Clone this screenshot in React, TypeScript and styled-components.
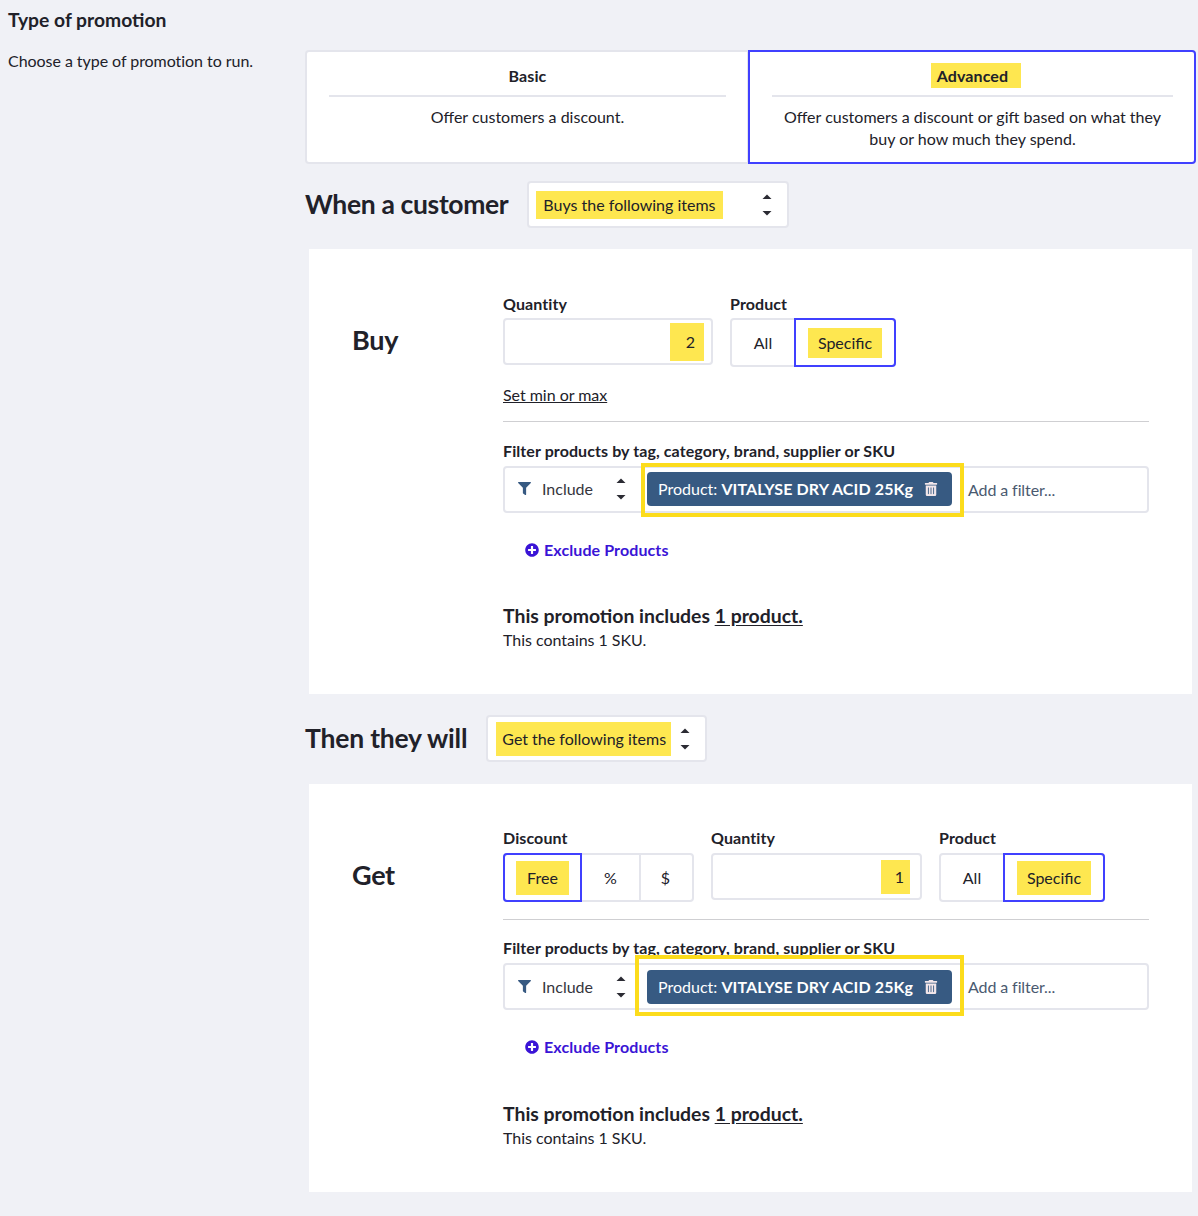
import { ReactNode } from 'react';
import { createGlobalStyle, styled } from 'styled-components';
import { FaFilter, FaPlusCircle, FaTrashAlt } from 'react-icons/fa';

const GlobalStyle = createGlobalStyle`
  html, body {
    margin: 0;
    background: #f0f1f6;
    color: #212129;
    font-family: Lato, "Open Sans", sans-serif;
    font-size: 16px;
  }
  * {
    box-sizing: border-box;
  }
`;

const Arrows = () => (
  <svg width="10" height="22" viewBox="0 0 10 22" fill="#2b2b33">
    <path d="M0.5 5 L5 0.5 L9.5 5 Z" />
    <path d="M0.5 17 L9.5 17 L5 21.5 Z" />
  </svg>
);

const Mark = styled.span<{ $pad?: string; $ml?: number }>`
  background: #fee750;
  padding: ${(p) => p.$pad || '6px'};
  margin-left: ${(p) => p.$ml || 0}px;
  line-height: 22px;
`;

const Page = styled.div`
  display: grid;
  grid-template-columns: 297px 891px;
  padding: 0 10px 24px 8px;
  width: 1198px;
`;

const Side = styled.div`
  h2 {
    margin: 8px 0 0;
    font-size: 19.3px;
    line-height: 24px;
    font-weight: 700;
  }
  p {
    margin: 18px 0 0;
    font-size: 16px;
    line-height: 22px;
    letter-spacing: -0.05px;
  }
`;

const Main = styled.div`
  padding-top: 50px;
`;

const Cards = styled.div`
  display: flex;
  height: 114px;
`;

const Card = styled.div<{ $active?: boolean; $w: number }>`
  width: ${(p) => p.$w}px;
  background: #fff;
  border: 2px solid ${(p) => (p.$active ? '#4040ff' : '#e4e5ec')};
  border-radius: ${(p) => (p.$active ? '0 4px 4px 0' : '4px 0 0 4px')};
  margin-right: ${(p) => (p.$active ? 0 : -1)}px;
  position: relative;
  z-index: ${(p) => (p.$active ? 1 : 0)};
  padding: 0 21px 0 22px;
  text-align: center;
  line-height: 22px;
`;

const CardTitle = styled.div`
  height: 45px;
  border-bottom: 2px solid #e4e5ec;
  font-weight: 700;
  padding-top: 13px;
  margin-bottom: 9px;
  letter-spacing: 0.1px;
`;

const Heading = styled.div<{ $top: number; $bottom: number; $ls: number }>`
  display: flex;
  align-items: center;
  gap: 19px;
  margin: ${(p) => p.$top}px 0 ${(p) => p.$bottom}px;
  h3 {
    margin: 0;
    font-size: 26.5px;
    font-weight: 700;
    line-height: 47px;
    letter-spacing: ${(p) => p.$ls}px;
  }
`;

const SelectBox = styled.div<{ $w: number; $pl: number }>`
  width: ${(p) => p.$w}px;
  height: 47px;
  background: #fff;
  border: 2px solid #e4e5ec;
  border-radius: 4px;
  display: flex;
  align-items: center;
  justify-content: space-between;
  padding: 0 15px 0 ${(p) => p.$pl}px;
`;

const Panel = styled.div<{ $h: number; $mb: number; $pt: number }>`
  margin: 0 4px ${(p) => p.$mb}px;
  height: ${(p) => p.$h}px;
  background: #fff;
  padding: ${(p) => p.$pt}px 43px 0 43px;
  display: grid;
  grid-template-columns: 151px 1fr;
`;

const PanelLabel = styled.div<{ $top: number }>`
  font-size: 27px;
  font-weight: 700;
  line-height: 36px;
  padding-top: ${(p) => p.$top}px;
  letter-spacing: -0.3px;
`;

const Fields = styled.div<{ $labelGap: number }>`
  display: flex;
  align-items: flex-start;
  gap: 17px;
  label {
    margin-bottom: ${(p) => p.$labelGap}px;
  }
`;

const Field = styled.div`
  label {
    display: block;
    font-weight: 700;
    line-height: 22px;
    letter-spacing: 0.1px;
  }
`;

const NumberBox = styled.div<{ $w: number; $pr: number }>`
  width: ${(p) => p.$w}px;
  height: 47px;
  background: #fff;
  border: 2px solid #e4e5ec;
  border-radius: 4px;
  display: flex;
  align-items: center;
  justify-content: flex-end;
  padding-right: ${(p) => p.$pr}px;
`;

const Toggle = styled.div`
  display: flex;
  height: 49px;
  border: 2px solid #e4e5ec;
  border-radius: 4px;
  background: #fff;
`;

const ToggleItem = styled.div<{ $active?: boolean; $w: number; $divider?: boolean }>`
  width: ${(p) => p.$w}px;
  flex: none;
  display: flex;
  align-items: center;
  justify-content: center;
  margin: -2px 0;
  border: 2px solid ${(p) => (p.$active ? '#4040ff' : 'transparent')};
  border-left-color: ${(p) => (p.$active ? '#4040ff' : p.$divider ? '#e4e5ec' : 'transparent')};
  &:first-child {
    border-radius: 4px 0 0 4px;
    margin-left: ${(p) => (p.$active ? -2 : 0)}px;
  }
  &:last-child {
    border-radius: 0 4px 4px 0;
    margin-right: ${(p) => (p.$active ? -2 : 0)}px;
  }
`;

const MinMax = styled.a`
  display: block;
  margin-top: 17px;
  line-height: 22px;
  text-decoration: underline;
  letter-spacing: -0.03px;
`;

const Divider = styled.hr<{ $top: number; $bottom: number }>`
  margin: ${(p) => p.$top}px 0 ${(p) => p.$bottom}px;
  border: 0;
  border-top: 1px solid #cfcfd2;
`;

const FilterTitle = styled.div`
  font-weight: 700;
  line-height: 22px;
  margin-bottom: 4px;
  letter-spacing: 0.09px;
`;

const FilterBox = styled.div<{ $lift?: boolean }>`
  height: 47px;
  background: #fff;
  border: 2px solid #e4e5ec;
  border-radius: 4px;
  display: flex;
  align-items: center;
  color: #35353d;
  padding-bottom: ${(p) => (p.$lift ? 2 : 0)}px;
`;

const IncludeSelect = styled.div`
  width: 142px;
  display: flex;
  align-items: center;
  padding-left: 13px;
  svg:first-child {
    color: #375a82;
    font-size: 13px;
  }
  span {
    margin: 0 18px 0 11px;
    width: 56px;
  }
`;

const ChipWrap = styled.div<{ $l: number; $t: number; $b: number }>`
  position: relative;
  &::after {
    content: '';
    position: absolute;
    left: -${(p) => p.$l}px;
    right: -12px;
    top: -${(p) => p.$t}px;
    bottom: -${(p) => p.$b}px;
    border: 4px solid #fcdc1c;
    pointer-events: none;
  }
`;

const Chip = styled.div`
  width: 305px;
  height: 34px;
  background: #375a82;
  border-radius: 4px;
  color: #fff;
  display: flex;
  align-items: center;
  justify-content: space-between;
  padding: 0 14px 0 11px;
  white-space: nowrap;
  b {
    font-weight: 700;
    letter-spacing: 0.12px;
  }
  svg {
    font-size: 14px;
    color: #f2e6ea;
  }
`;

const AddFilter = styled.div<{ $lift?: boolean }>`
  margin: ${(p) => (p.$lift ? 2 : 0)}px 0 0 16px;
  color: #4a5a70;
  letter-spacing: -0.1px;
`;

const Exclude = styled.a`
  display: flex;
  align-items: center;
  gap: 5px;
  margin: 26px 0 0 22px;
  line-height: 22px;
  font-weight: 700;
  color: #3a14d6;
  letter-spacing: 0.1px;
  svg {
    font-size: 14px;
  }
`;

const Summary = styled.div<{ $top: number }>`
  margin-top: ${(p) => p.$top}px;
  font-size: 19.4px;
  font-weight: 700;
  line-height: 24px;
  u {
    text-underline-offset: 2px;
  }
`;

const SummaryNote = styled.div`
  line-height: 24px;
  letter-spacing: -0.03px;
`;

interface FilterSectionProps {
  l: number;
  t: number;
  b: number;
  top: number;
  lift?: boolean;
}

const FilterSection = ({ l, t, b, top, lift }: FilterSectionProps) => (
  <>
    <FilterTitle>Filter products by tag, category, brand, supplier or SKU</FilterTitle>
    <FilterBox $lift={lift}>
      <IncludeSelect>
        <FaFilter />
        <span>Include</span>
        <Arrows />
      </IncludeSelect>
      <ChipWrap $l={l} $t={t} $b={b}>
        <Chip>
          <span>
            Product: <b>VITALYSE DRY ACID 25Kg</b>
          </span>
          <FaTrashAlt />
        </Chip>
      </ChipWrap>
      <AddFilter $lift={lift}>Add a filter...</AddFilter>
    </FilterBox>
    <Exclude>
      <FaPlusCircle />
      Exclude Products
    </Exclude>
    <Summary $top={top}>
      This promotion includes <u>1 product.</u>
    </Summary>
    <SummaryNote>This contains 1 SKU.</SummaryNote>
  </>
);

const Labelled = ({ label, children }: { label: string; children: ReactNode }) => (
  <Field>
    <label>{label}</label>
    {children}
  </Field>
);

const ProductToggle = ({ pad }: { pad: string }) => (
  <Toggle>
    <ToggleItem $w={62}>All</ToggleItem>
    <ToggleItem $w={102} $active>
      <Mark $pad={pad}>Specific</Mark>
    </ToggleItem>
  </Toggle>
);

const App = () => (
  <>
    <GlobalStyle />
    <Page>
      <Side>
        <h2>Type of promotion</h2>
        <p>Choose a type of promotion to run.</p>
      </Side>
      <Main>
        <Cards>
          <Card $w={444}>
            <CardTitle>Basic</CardTitle>
            Offer customers a discount.
          </Card>
          <Card $w={448} $active>
            <CardTitle>
              <Mark $pad="3px 13px 3px 6px" $ml={7}>Advanced</Mark>
            </CardTitle>
            Offer customers a discount or gift based on what they buy or how much they spend.
          </Card>
        </Cards>

        <Heading $top={17} $bottom={21} $ls={-0.35}>
          <h3>When a customer</h3>
          <SelectBox $w={262} $pl={7}>
            <Mark $pad="3px 7px">Buys the following items</Mark>
            <Arrows />
          </SelectBox>
        </Heading>

        <Panel $h={445} $mb={21} $pt={44}>
          <PanelLabel $top={29}>Buy</PanelLabel>
          <div>
            <Fields $labelGap={3}>
              <Labelled label="Quantity">
                <NumberBox $w={210} $pr={7}>
                  <Mark $pad="8px 9px 8px 16px">2</Mark>
                </NumberBox>
              </Labelled>
              <Labelled label="Product">
                <ProductToggle pad="4px 10px" />
              </Labelled>
            </Fields>
            <MinMax>Set min or max</MinMax>
            <Divider $top={15} $bottom={18} />
            <FilterSection l={6} t={9} b={11} top={43} lift />
          </div>
        </Panel>

        <Heading $top={0} $bottom={22} $ls={-0.2}>
          <h3>Then they will</h3>
          <SelectBox $w={221} $pl={8}>
            <Mark $pad="6px 5px 6px 6px">Get the following items</Mark>
            <Arrows />
          </SelectBox>
        </Heading>

        <Panel $h={408} $mb={0} $pt={43}>
          <PanelLabel $top={30}>Get</PanelLabel>
          <div>
            <Fields $labelGap={4}>
              <Labelled label="Discount">
                <Toggle>
                  <ToggleItem $w={79} $active>
                    <Mark $pad="6px 11px">Free</Mark>
                  </ToggleItem>
                  <ToggleItem $w={57}>%</ToggleItem>
                  <ToggleItem $w={53} $divider>$</ToggleItem>
                </Toggle>
              </Labelled>
              <Labelled label="Quantity">
                <NumberBox $w={211} $pr={10}>
                  <Mark $pad="6px 6px 6px 14px">1</Mark>
                </NumberBox>
              </Labelled>
              <Labelled label="Product">
                <ProductToggle pad="6px 10px" />
              </Labelled>
            </Fields>
            <Divider $top={17} $bottom={17} />
            <FilterSection l={12} t={15} b={12} top={44} />
          </div>
        </Panel>
      </Main>
    </Page>
  </>
);

export default App;
